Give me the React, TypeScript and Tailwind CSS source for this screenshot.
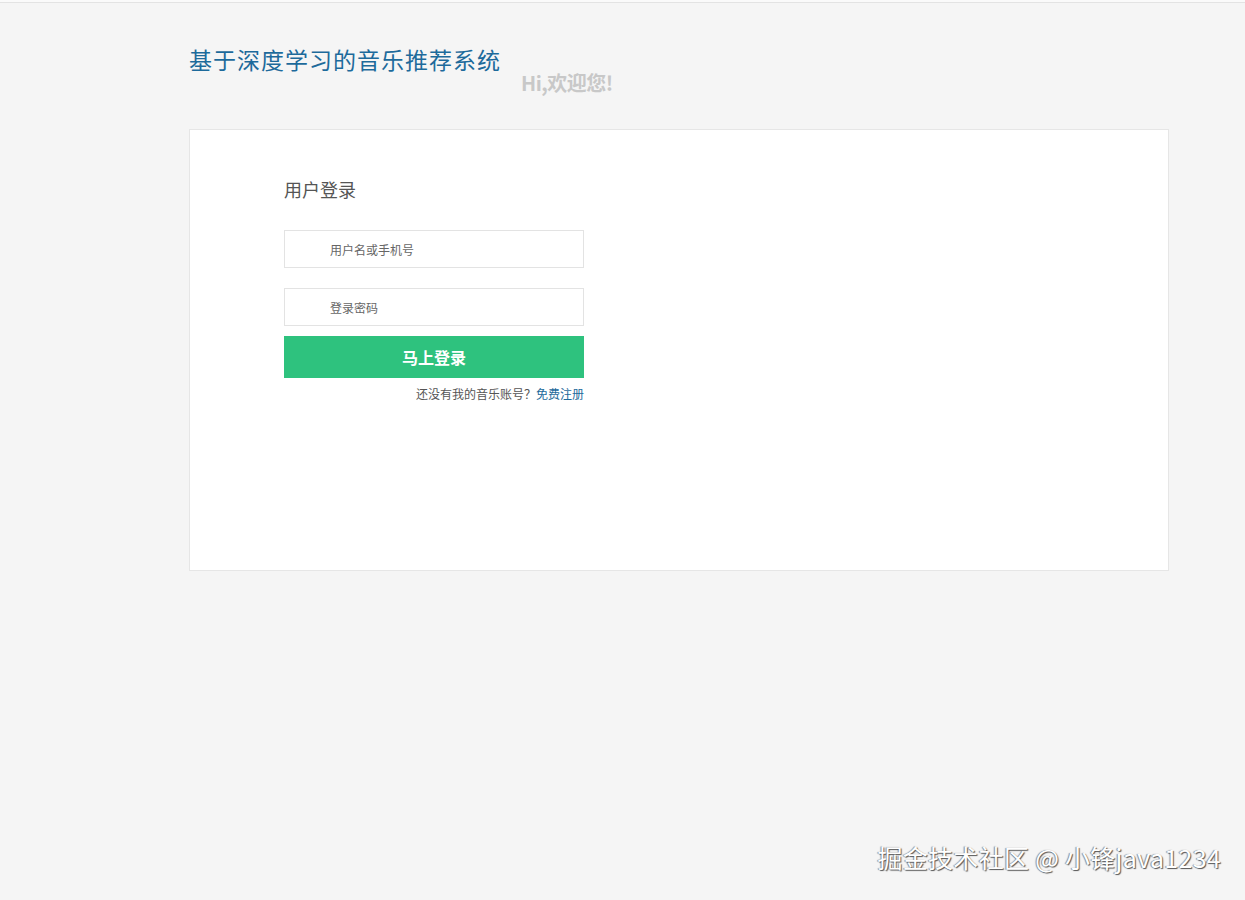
export default function App() {
  return (
    <div
      className="min-h-[900px] bg-[#f5f5f5]"
      style={{ fontFamily: '"Noto Sans CJK SC", "Noto Sans", sans-serif' }}
    >
      <div className="h-[2px] bg-[#fafafa]" />
      <div className="border-t border-[#e3e3e3]" />

      {/* Header */}
      <div className="ml-[189px] w-[980px] pt-[40px] flex items-start">
        <h1 className="text-[23px] leading-[32px] text-[#1d6a9b] tracking-[1px]">
          基于深度学习的音乐推荐系统
        </h1>
        <span className="ml-[20px] mt-[28px] text-[20px] leading-[24px] text-[#c8c8c8] font-semibold tracking-[-0.5px]">
          Hi,欢迎您!
        </span>
      </div>

      {/* Card */}
      <div className="ml-[189px] mt-[34px] w-[980px] h-[442px] bg-white border border-[#e6e6e6]">
        <div className="ml-[94px] w-[300px] pt-[46px]">
          <h2 className="text-[18px] leading-[26px] text-[#555]">用户登录</h2>
          <div className="mt-[28px] flex flex-col">
            <input
              placeholder="用户名或手机号"
              className="h-[38px] border border-[#e3e3e3] bg-white pl-[45px] text-[12px] text-[#555] placeholder:text-[#666] outline-none"
            />
            <input
              type="password"
              placeholder="登录密码"
              className="mt-[20px] h-[38px] border border-[#e3e3e3] bg-white pl-[45px] text-[12px] text-[#555] placeholder:text-[#666] outline-none"
            />
            <button className="mt-[10px] h-[42px] bg-[#2ec27e] text-white text-[16px] font-bold">
              马上登录
            </button>
            <p className="mt-[7px] text-right text-[12px] leading-[18px] text-[#555]">
              还没有我的音乐账号？<a className="text-[#1d6a9b] cursor-pointer">免费注册</a>
            </p>
          </div>
        </div>
      </div>

      {/* Watermark */}
      <div className="flex justify-end pr-[24px] pt-[270px]">
        <span
          className="text-[25px] leading-[32px] text-white tracking-[0.3px]"
          style={{ textShadow: '1px 1px 1px #555, -1px 0 1px #888' }}
        >
          掘金技术社区 @ 小锋java1234
        </span>
      </div>
    </div>
  );
}
